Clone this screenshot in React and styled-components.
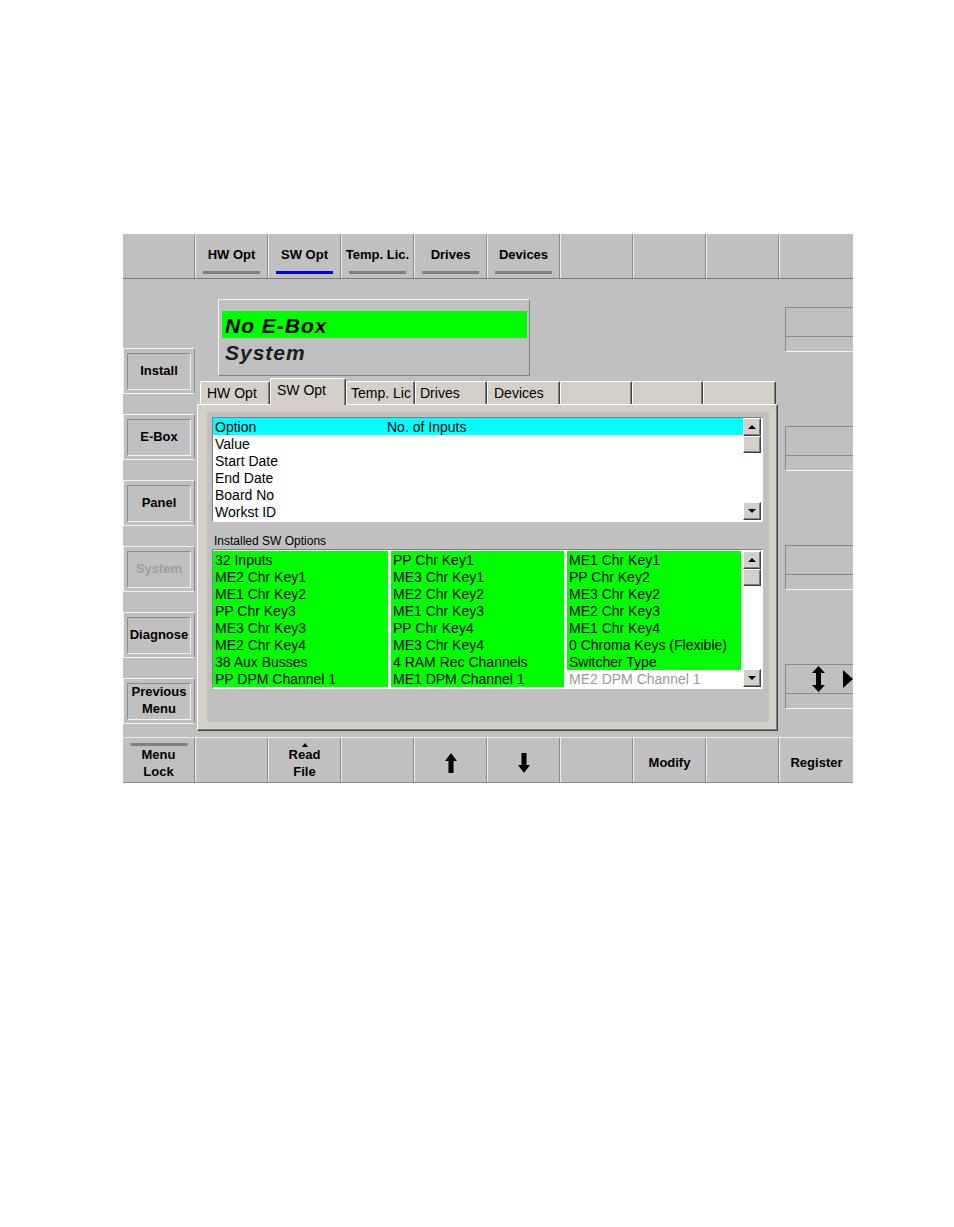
import React from 'react';
import styled, { createGlobalStyle } from 'styled-components';

const Global = createGlobalStyle`
  html, body { margin: 0; padding: 0; background: #ffffff; }
  body { font-family: "Liberation Sans", Arial, sans-serif; color: #000; }
`;

const FONT = `"Liberation Sans", Arial, sans-serif`;

const Page = styled.div`
  width: 954px;
  height: 1227px;
  box-sizing: border-box;
  padding: 234px 0 0 123px;
`;

const Panel = styled.div`
  width: 730px;
  height: 549px;
  background: #c0c0c0;
  display: flex;
  flex-direction: column;
  overflow: hidden;
`;

const TopBar = styled.div`
  display: grid;
  grid-template-columns: 72px repeat(8, 73px) 1fr;
  height: 45px;
  box-sizing: border-box;
  border-bottom: 1px solid #7c7c7c;
`;

const BottomBar = styled.div`
  display: grid;
  grid-template-columns: 72px repeat(8, 73px) 1fr;
  height: 46px;
  box-sizing: border-box;
  border-top: 1px solid #ececec;
  border-bottom: 1px solid #8a8a8a;
`;

const BarCell = styled.div`
  position: relative;
  display: flex;
  flex-direction: column;
  align-items: center;
  justify-content: ${p => (p.$top ? 'flex-start' : 'center')};
  padding-top: ${p => (p.$top ? '12px' : '5px')};
  box-sizing: border-box;
  border-left: 1px solid #ececec;
  border-right: 1px solid #8a8a8a;
  &:first-child { border-left: none; }
  &:last-child { border-right: none; }
`;

const BarLabel = styled.span`
  font: bold 13px/17px ${FONT};
  color: #000;
  text-align: center;
  white-space: nowrap;
`;

const Indicator = styled.div`
  width: 57px;
  height: 3px;
  margin-top: 8px;
  background: ${p => (p.$active ? '#0000ff' : '#808080')};
`;

const TopIndicator = styled.div`
  position: absolute;
  top: 5px;
  left: 50%;
  transform: translateX(-50%);
  width: 57px;
  height: 3px;
  background: #808080;
`;

const SmallCaret = styled.div`
  position: absolute;
  top: 5px;
  left: 50%;
  transform: translateX(-50%);
  width: 0;
  height: 0;
  border-left: 3px solid transparent;
  border-right: 3px solid transparent;
  border-bottom: 4px solid #000;
`;

const Middle = styled.div`
  display: grid;
  grid-template-columns: 72px 584px 1fr;
  height: 458px;
`;

const LeftCol = styled.div`
  display: flex;
  flex-direction: column;
  gap: 20px;
  padding-top: 69px;
`;

const SideButton = styled.div`
  height: 46px;
  box-sizing: border-box;
  padding: 4px 3px 3px 3px;
  border: 1px solid;
  border-color: #f2f2f2 #8c8c8c #f2f2f2 #f2f2f2;
`;

const SideFace = styled.div`
  height: 100%;
  box-sizing: border-box;
  border: 1px solid;
  border-color: #8c8c8c #f2f2f2 #f2f2f2 #8c8c8c;
  display: flex;
  align-items: center;
  justify-content: center;
  text-align: center;
  padding-bottom: 3px;
  font: bold 13px/17px ${FONT};
  color: ${p => (p.$disabled ? '#9c9c9c' : '#000')};
`;

const CenterCol = styled.div`
  display: flex;
  flex-direction: column;
  padding-top: 20px;
`;

const StatusBox = styled.div`
  margin-left: 23px;
  width: 312px;
  height: 77px;
  box-sizing: border-box;
  border: 1px solid;
  border-color: #f4f4f4 #808080 #808080 #f4f4f4;
  padding: 11px 2px 0 3px;
`;

const StatusLine = styled.div`
  height: 27px;
  background: ${p => (p.$hl ? '#00ff00' : 'transparent')};
  font: italic bold 21px/29px ${FONT};
  letter-spacing: 1px;
  color: ${p => (p.$hl ? '#000' : '#1c1c1c')};
  padding-left: 3px;
`;

const TabArea = styled.div`
  margin-top: 2px;
  margin-left: 2px;
  width: 581px;
  display: flex;
  flex-direction: column;
`;

const TabStrip = styled.div`
  display: flex;
  align-items: flex-end;
  height: 26px;
  padding-left: 3px;
`;

const Tab = styled.div`
  position: relative;
  z-index: ${p => (p.$active ? 1 : 0)};
  width: ${p => p.$w}px;
  height: ${p => (p.$active ? 27 : 23)}px;
  margin-bottom: ${p => (p.$active ? -1 : 0)}px;
  box-sizing: border-box;
  background: #d4d0c8;
  border-top: 1px solid #ffffff;
  border-left: 1px solid #ffffff;
  border-right: 1px solid #404040;
  box-shadow: inset -1px 0 0 #808080;
  border-radius: 2px 2px 0 0;
  padding: 3px 0 0 ${p => p.$pad}px;
  font: 14px/17px ${FONT};
  color: #000;
  white-space: nowrap;
  overflow: hidden;
`;

const TabBody = styled.div`
  height: 327px;
  box-sizing: border-box;
  background: #d4d0c8;
  border-top: 1px solid #ffffff;
  border-left: 1px solid #ffffff;
  border-right: 1px solid #404040;
  border-bottom: 1px solid #404040;
  box-shadow: inset -1px -1px 0 #808080;
  padding: 7px 8px 8px 9px;
  display: flex;
`;

const Inner = styled.div`
  flex: 1;
  background: #c0c0c0;
  padding: 5px 0 0 5px;
  display: flex;
  flex-direction: column;
`;

const ListBox = styled.div`
  width: 551px;
  height: ${p => p.$h}px;
  box-sizing: border-box;
  border: 1px solid;
  border-color: #808080 #ffffff #ffffff #808080;
  background: #ffffff;
  display: flex;
  padding: ${p => p.$pt}px 1px 1px 0;
`;

const ListRows = styled.div`
  flex: 1;
  display: flex;
  flex-direction: column;
`;

const PropRow = styled.div`
  display: grid;
  grid-template-columns: 172px 1fr;
  height: 17px;
  background: ${p => (p.$sel ? '#00ffff' : 'transparent')};
`;

const Text = styled.span`
  font: 14px/17px ${FONT};
  padding: 1px 0 0 2px;
  height: 17px;
  box-sizing: border-box;
  color: ${p => (p.$muted ? '#9a9a9a' : '#000')};
  white-space: nowrap;
  overflow: hidden;
`;

const SectionLabel = styled.div`
  margin-top: 9px;
  height: 18px;
  font: 12px/20px ${FONT};
  padding-left: 2px;
  color: #000;
`;

const Columns = styled.div`
  flex: 1;
  display: flex;
  gap: 3px;
  margin-right: 2px;
`;

const OptColumn = styled.div`
  width: ${p => p.$w}px;
  display: flex;
  flex-direction: column;
`;

const OptCell = styled.div`
  height: 17px;
  display: flex;
  background: ${p => (p.$muted ? '#ffffff' : '#00ff00')};
`;

const Scrollbar = styled.div`
  width: 18px;
  display: flex;
  flex-direction: column;
`;

const ScrollBtn = styled.div`
  height: 18px;
  box-sizing: border-box;
  background: #d4d0c8;
  border: 1px solid;
  border-color: #ffffff #404040 #404040 #ffffff;
  box-shadow: inset -1px -1px 0 #808080;
  display: flex;
  align-items: center;
  justify-content: center;
`;

const Thumb = styled(ScrollBtn)`
  height: 17px;
`;

const Track = styled.div`
  flex: 1;
  background: #ffffff;
`;

const Arrowhead = styled.div`
  width: 0;
  height: 0;
  border-left: 4px solid transparent;
  border-right: 4px solid transparent;
  ${p => (p.$down ? 'border-top: 4px solid #000;' : 'border-bottom: 4px solid #000;')}
`;

const RightCol = styled.div`
  display: flex;
  flex-direction: column;
  gap: 74px;
  padding-top: 28px;
  padding-left: 6px;
`;

const RightBox = styled.div`
  height: 45px;
  box-sizing: border-box;
  border-top: 1px solid #8a8a8a;
  border-left: 1px solid #8a8a8a;
  border-bottom: 1px solid #f4f4f4;
  display: grid;
  grid-template-rows: 29px 1fr;
`;

const RightTop = styled.div`
  border-bottom: 1px solid #8a8a8a;
  display: flex;
  align-items: center;
  padding-left: 26px;
  gap: 18px;
`;

function Sb() {
  return (
    <Scrollbar>
      <ScrollBtn><Arrowhead /></ScrollBtn>
      <Thumb />
      <Track />
      <ScrollBtn><Arrowhead $down /></ScrollBtn>
    </Scrollbar>
  );
}

const UpArrow = () => (
  <svg width="12" height="20" viewBox="0 0 12 20">
    <polygon points="6,0 12,8 8.5,8 8.5,20 3.5,20 3.5,8 0,8" fill="#000" />
  </svg>
);
const DownArrow = () => (
  <svg width="12" height="20" viewBox="0 0 12 20">
    <polygon points="6,20 12,12 8.5,12 8.5,0 3.5,0 3.5,12 0,12" fill="#000" />
  </svg>
);
const UpDown = () => (
  <svg width="13" height="26" viewBox="0 0 13 26">
    <polygon points="6.5,0 13,7 9,7 9,19 13,19 6.5,26 0,19 4,19 4,7 0,7" fill="#000" />
  </svg>
);
const RightTri = () => (
  <svg width="10" height="18" viewBox="0 0 10 18">
    <polygon points="0,0 10,9 0,18" fill="#000" />
  </svg>
);

const topTabs = ['', 'HW Opt', 'SW Opt', 'Temp. Lic.', 'Drives', 'Devices', '', '', '', ''];
const innerTabs = [
  { l: 'HW Opt', w: 70 },
  { l: 'SW Opt', w: 76, active: true },
  { l: 'Temp. Lic', w: 69, pad: 4 },
  { l: 'Drives', w: 72, pad: 4 },
  { l: 'Devices', w: 73 },
  { l: '', w: 72 },
  { l: '', w: 71 },
  { l: '', w: 73 },
];
const props = ['Value', 'Start Date', 'End Date', 'Board No', 'Workst ID'];
const col1 = ['32 Inputs', 'ME2 Chr Key1', 'ME1 Chr Key2', 'PP Chr Key3', 'ME3 Chr Key3', 'ME2 Chr Key4', '38 Aux Busses', 'PP DPM Channel 1'];
const col2 = ['PP Chr Key1', 'ME3 Chr Key1', 'ME2 Chr Key2', 'ME1 Chr Key3', 'PP Chr Key4', 'ME3 Chr Key4', '4 RAM Rec Channels', 'ME1 DPM Channel 1'];
const col3 = ['ME1 Chr Key1', 'PP Chr Key2', 'ME3 Chr Key2', 'ME2 Chr Key3', 'ME1 Chr Key4', '0 Chroma Keys (Flexible)', 'Switcher Type', 'ME2 DPM Channel 1'];
const sideButtons = [['Install'], ['E-Box'], ['Panel'], ['System', true], ['Diagnose'], ['Previous', 'Menu']];

export default function App() {
  return (
    <Page>
      <Global />
      <Panel>
        <TopBar>
          {topTabs.map((t, i) => (
            <BarCell $top key={i}>
              {t && <BarLabel>{t}</BarLabel>}
              {t && <Indicator $active={t === 'SW Opt'} />}
            </BarCell>
          ))}
        </TopBar>

        <Middle>
          <LeftCol>
            {sideButtons.map((b, i) => (
              <SideButton key={i}>
                <SideFace $disabled={b[1] === true}>
                  {b[1] && b[1] !== true ? (<>{b[0]}<br />{b[1]}</>) : b[0]}
                </SideFace>
              </SideButton>
            ))}
          </LeftCol>

          <CenterCol>
            <StatusBox>
              <StatusLine $hl>No E-Box</StatusLine>
              <StatusLine>System</StatusLine>
            </StatusBox>
            <TabArea>
              <TabStrip>
                {innerTabs.map((t, i) => (
                  <Tab key={i} $w={t.w} $active={t.active} $pad={t.pad || 6}>{t.l}</Tab>
                ))}
              </TabStrip>
              <TabBody>
                <Inner>
                  <ListBox $h={105} $pt={0}>
                    <ListRows>
                      <PropRow $sel>
                        <Text>Option</Text>
                        <Text>No. of Inputs</Text>
                      </PropRow>
                      {props.map(p => (
                        <PropRow key={p}><Text>{p}</Text></PropRow>
                      ))}
                    </ListRows>
                    <Sb />
                  </ListBox>
                  <SectionLabel>Installed SW Options</SectionLabel>
                  <ListBox $h={140} $pt={1}>
                    <Columns>
                      <OptColumn $w={175}>
                        {col1.map(c => <OptCell key={c}><Text>{c}</Text></OptCell>)}
                      </OptColumn>
                      <OptColumn $w={173}>
                        {col2.map(c => <OptCell key={c}><Text>{c}</Text></OptCell>)}
                      </OptColumn>
                      <OptColumn $w={174}>
                        {col3.map((c, i) => (
                          <OptCell key={c} $muted={i === 7}><Text $muted={i === 7}>{c}</Text></OptCell>
                        ))}
                      </OptColumn>
                    </Columns>
                    <Sb />
                  </ListBox>
                </Inner>
              </TabBody>
            </TabArea>
          </CenterCol>

          <RightCol>
            <RightBox><RightTop /></RightBox>
            <RightBox><RightTop /></RightBox>
            <RightBox><RightTop /></RightBox>
            <RightBox><RightTop><UpDown /><RightTri /></RightTop></RightBox>
          </RightCol>
        </Middle>

        <BottomBar>
          <BarCell><TopIndicator /><BarLabel>Menu<br />Lock</BarLabel></BarCell>
          <BarCell />
          <BarCell><SmallCaret /><BarLabel>Read<br />File</BarLabel></BarCell>
          <BarCell />
          <BarCell><UpArrow /></BarCell>
          <BarCell><DownArrow /></BarCell>
          <BarCell />
          <BarCell><BarLabel>Modify</BarLabel></BarCell>
          <BarCell />
          <BarCell><BarLabel>Register</BarLabel></BarCell>
        </BottomBar>
      </Panel>
    </Page>
  );
}
